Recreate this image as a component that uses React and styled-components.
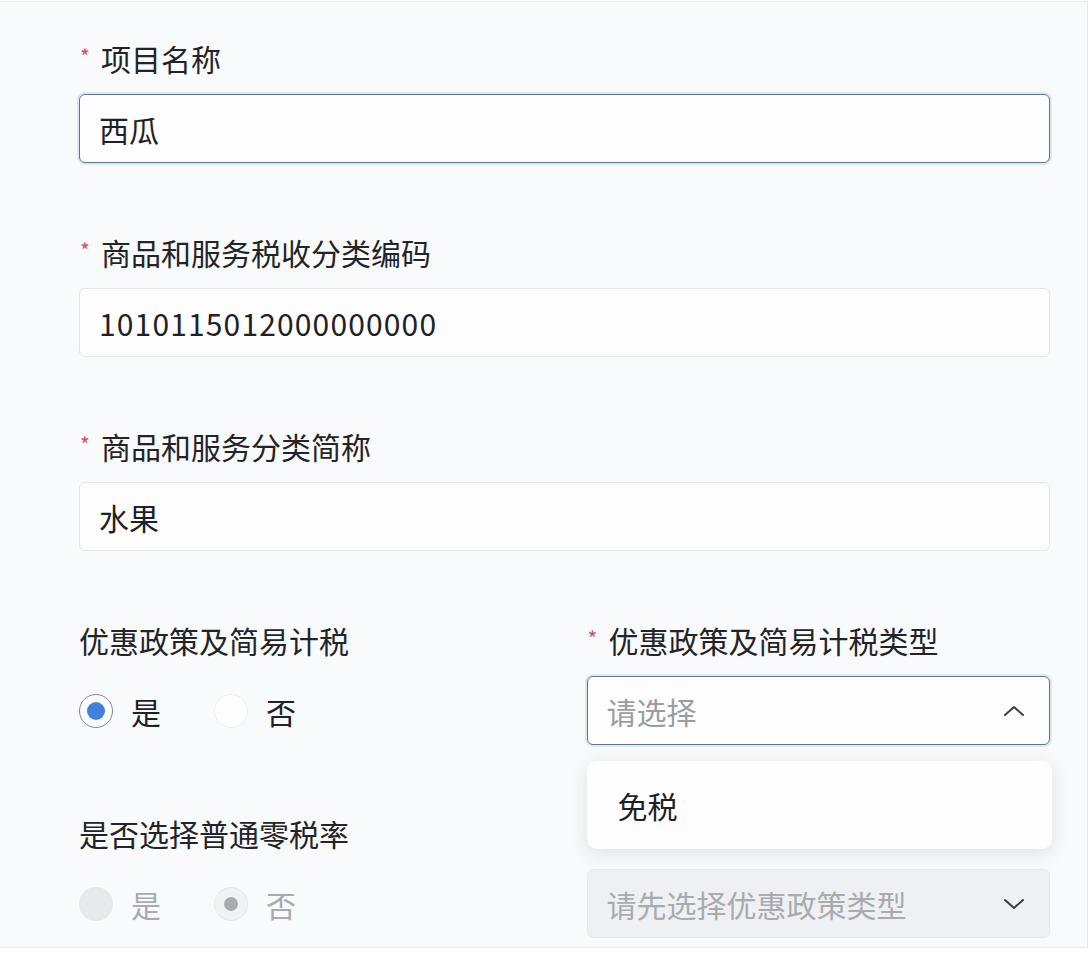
import React from "react";
import styled, { createGlobalStyle } from "styled-components";

const Global = createGlobalStyle`
  html, body {
    margin: 0;
    padding: 0;
    background: #ffffff;
    font-family: "Noto Sans CJK SC", "Noto Sans", sans-serif;
    color: #222428;
  }
`;

const Card = styled.div`
  box-sizing: border-box;
  margin: 1px 0 0 -1px;
  width: 1089px;
  height: 947px;
  border: 1px solid #e7e9ed;
  background: #f9fafc;
  padding: 36px 37px 0 79px;
  overflow: hidden;
`;

const Field = styled.div`
  position: relative;
  margin-bottom: ${(p) => (p.$tight ? "68px" : "69px")};
`;

const Row = styled.div`
  display: grid;
  grid-template-columns: 1fr 1fr;
  column-gap: 44px;
`;

const Label = styled.div`
  height: 40px;
  line-height: 40px;
  font-size: 30px;
  margin-bottom: 16px;
  display: flex;
  align-items: center;
  white-space: nowrap;
`;

const Star = styled.span`
  color: #cf4f72;
  font-size: 21px;
  width: 21px;
  margin-left: 1px;
  align-self: flex-start;
  line-height: 36px;
`;

const Input = styled.div`
  box-sizing: border-box;
  height: 69px;
  border: 1px solid ${(p) => (p.$focused ? "#62768a" : "#e2e5ea")};
  border-radius: 6px;
  background: #fdfdfe;
  padding: 0 19px;
  display: flex;
  align-items: center;
  font-size: 30px;
  letter-spacing: ${(p) => (p.$wide ? "1.15px" : "0")};
  color: #1f2125;
  box-shadow: ${(p) => (p.$focused ? "0 0 0 2px rgba(160,200,230,0.35)" : "none")};
`;

const Select = styled(Input)`
  justify-content: space-between;
  padding-right: 24px;
  color: ${(p) => (p.$disabled ? "#a9abae" : "#9b9da1")};
  background: ${(p) => (p.$disabled ? "#eef0f3" : "#fdfdfe")};
  border-color: ${(p) => (p.$disabled ? "#e6e8ec" : p.$focused ? "#62768a" : "#e2e5ea")};
`;

const Menu = styled.div`
  position: absolute;
  left: 0;
  right: -2px;
  top: 141px;
  height: 88px;
  box-sizing: border-box;
  background: #fefefe;
  border-radius: 10px;
  box-shadow: 0 4px 18px rgba(30, 40, 60, 0.13);
  padding-left: 31px;
  display: flex;
  align-items: center;
  font-size: 30px;
  color: #1f2125;
  z-index: 2;
`;

const Radios = styled.div`
  height: 69px;
  display: flex;
  align-items: center;
  gap: 53px;
`;

const RadioItem = styled.label`
  display: flex;
  align-items: center;
  gap: 18px;
  font-size: 30px;
  color: ${(p) => (p.$disabled ? "#a8aaad" : "#1f2125")};
`;

const Circle = styled.span`
  box-sizing: border-box;
  width: 34px;
  height: 34px;
  border-radius: 50%;
  display: flex;
  align-items: center;
  justify-content: center;
  border: 1.5px solid
    ${(p) => (p.$disabled ? "#e6e7ea" : p.$checked ? "#7d8895" : "#eceef1")};
  background: ${(p) => (p.$disabled ? (p.$checked ? "#f1f2f4" : "#e8e9eb") : "#fdfdfe")};

  &::after {
    content: "";
    display: ${(p) => (p.$checked ? "block" : "none")};
    width: ${(p) => (p.$disabled ? "14px" : "18px")};
    height: ${(p) => (p.$disabled ? "14px" : "18px")};
    border-radius: 50%;
    background: ${(p) => (p.$disabled ? "#a9abae" : "#3f81e0")};
  }
`;

const Chevron = ({ up }) => (
  <svg width="22" height="14" viewBox="0 0 22 14" fill="none">
    <path
      d={up ? "M2 11 L11 3 L20 11" : "M2 3 L11 11 L20 3"}
      stroke="#3a3d44"
      strokeWidth="2"
      strokeLinecap="round"
      strokeLinejoin="round"
    />
  </svg>
);

function Radio({ label, checked, disabled }) {
  return (
    <RadioItem $disabled={disabled}>
      <Circle $checked={checked} $disabled={disabled} />
      {label}
    </RadioItem>
  );
}

export default function App() {
  return (
    <>
      <Global />
      <Card>
        <Field>
          <Label>
            <Star>*</Star>项目名称
          </Label>
          <Input $focused>西瓜</Input>
        </Field>
        <Field>
          <Label>
            <Star>*</Star>商品和服务税收分类编码
          </Label>
          <Input $wide>1010115012000000000</Input>
        </Field>
        <Field>
          <Label>
            <Star>*</Star>商品和服务分类简称
          </Label>
          <Input>水果</Input>
        </Field>
        <Row>
          <Field $tight>
            <Label>优惠政策及简易计税</Label>
            <Radios>
              <Radio label="是" checked />
              <Radio label="否" />
            </Radios>
          </Field>
          <Field $tight>
            <Label>
              <Star>*</Star>优惠政策及简易计税类型
            </Label>
            <Select $focused>
              请选择
              <Chevron up />
            </Select>
            <Menu>免税</Menu>
          </Field>
        </Row>
        <Row>
          <Field>
            <Label>是否选择普通零税率</Label>
            <Radios>
              <Radio label="是" disabled />
              <Radio label="否" checked disabled />
            </Radios>
          </Field>
          <Field>
            <Label>&nbsp;</Label>
            <Select $disabled>
              请先选择优惠政策类型
              <Chevron />
            </Select>
          </Field>
        </Row>
      </Card>
    </>
  );
}
